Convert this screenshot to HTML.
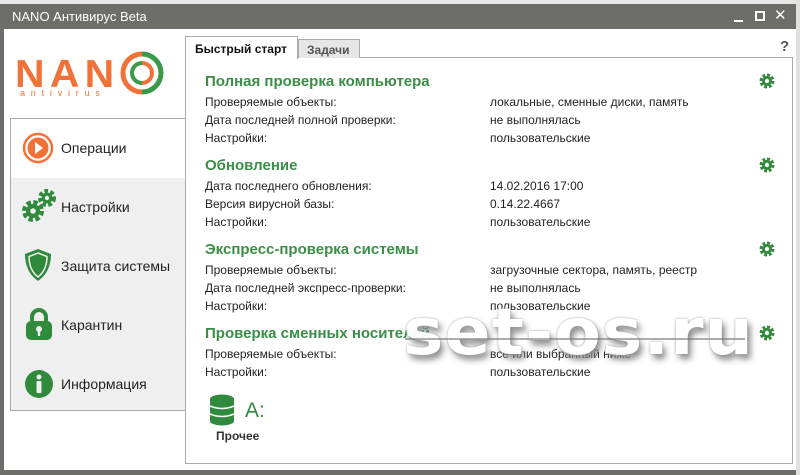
<!DOCTYPE html>
<html><head><meta charset="utf-8"><style>
*{margin:0;padding:0;box-sizing:border-box}
body{width:800px;height:475px;overflow:hidden;background:#fff;font-family:"Liberation Sans","DejaVu Sans",sans-serif;position:relative;color:#222}
.a{position:absolute}
.t{font-size:12px;white-space:nowrap}
.h{font-size:15px;font-weight:bold;color:#3a8e45;white-space:nowrap}
.nav{font-size:14px;color:#222;white-space:nowrap}
</style></head><body>
<div class="a" style="left:0;top:0;width:800px;height:4px;background:#e8e8e8"></div>
<div class="a" style="left:0;top:4px;width:796px;height:25px;background:#6d6d6a"></div>
<div class="a" style="left:0;top:4px;width:4px;height:471px;background:#6d6d6a"></div>
<div class="a" style="left:0;top:470px;width:796px;height:5px;background:#6d6d6a"></div>
<div class="a" style="left:796px;top:0;width:4px;height:475px;background:#e0e0e0"></div>
<div class="a" style="left:12px;top:9px;color:#fff;font-size:13px">NANO Антивирус Beta</div>
<div class="a" style="left:734px;top:20px;width:9px;height:2px;background:#fff"></div>
<div class="a" style="left:755px;top:11px;width:10px;height:10px;border:2px solid #fff"></div>
<div class="a" style="left:774px;top:6px;color:#fff;font-size:15px;font-weight:bold">✕</div>
<div class="a" style="left:780px;top:38px;font-size:15px;font-weight:bold;color:#555">?</div>

<!-- logo -->
<div class="a" style="left:15px;top:53px;font-size:39px;color:#f07238;letter-spacing:5px;font-weight:bold;transform:scaleX(1.05);transform-origin:left">NAN</div>
<svg class="a" style="left:119px;top:50px" width="46" height="46" viewBox="0 0 46 46">
<path d="M23 4 A19 19 0 0 0 23 42" fill="none" stroke="#f07238" stroke-width="5"/>
<path d="M23 4 A19 19 0 0 1 23 42" fill="none" stroke="#3a9a48" stroke-width="5"/>
<path d="M23 13 A10 10 0 0 0 23 33" fill="none" stroke="#3a9a48" stroke-width="4"/>
<path d="M23 13 A10 10 0 0 1 23 33" fill="none" stroke="#f07238" stroke-width="4"/>
</svg>
<div class="a" style="left:20px;top:88px;font-size:9px;color:#f07238;letter-spacing:5.8px">antivirus</div>

<!-- sidebar -->
<div class="a" style="left:10px;top:118px;width:176px;height:293px;background:#efefef;border:1px solid #aaa"></div>
<div class="a" style="left:11px;top:119px;width:175px;height:59px;background:#fff"></div>
<svg class="a" style="left:22px;top:132px" width="32" height="32"><circle cx="16" cy="16" r="14" fill="none" stroke="#f07238" stroke-width="2.5"/><circle cx="16" cy="16" r="10.5" fill="#f07238"/><path d="M13 10 L21 16 L13 22 Z" fill="#fff"/></svg>
<div class="a nav" style="left:61px;top:140px">Операции</div>
<svg class="a" style="left:19px;top:189px" width="38" height="36"><circle cx="14" cy="22" r="8" fill="none" stroke="#2f8a3c" stroke-width="6" stroke-dasharray="4 2.3"/><circle cx="14" cy="22" r="7" fill="#2f8a3c"/><circle cx="14" cy="22" r="2.8" fill="#efefef"/><circle cx="28" cy="9" r="6.5" fill="none" stroke="#2f8a3c" stroke-width="5" stroke-dasharray="3.4 2.2"/><circle cx="28" cy="9" r="5.5" fill="#2f8a3c"/><circle cx="28" cy="9" r="2.2" fill="#efefef"/></svg>
<div class="a nav" style="left:61px;top:199px">Настройки</div>
<svg class="a" style="left:24px;top:248px" width="28" height="34"><path d="M14 1 L27 6 Q27 24 14 33 Q1 24 1 6 Z" fill="#2f8a3c"/><path d="M14 5 L23 8.5 Q23 22 14 29 Q5 22 5 8.5 Z" fill="none" stroke="#efefef" stroke-width="1.5"/></svg>
<div class="a nav" style="left:61px;top:258px">Защита системы</div>
<svg class="a" style="left:25px;top:307px" width="28" height="34"><path d="M7 14 V10 A7 7 0 0 1 21 10 V14" fill="none" stroke="#2f8a3c" stroke-width="4"/><rect x="1" y="14" width="26" height="19" rx="5" fill="#2f8a3c"/><circle cx="14" cy="22" r="3" fill="#efefef"/><rect x="12.8" y="23" width="2.4" height="6" fill="#efefef"/></svg>
<div class="a nav" style="left:61px;top:317px">Карантин</div>
<svg class="a" style="left:24px;top:369px" width="30" height="30"><circle cx="15" cy="15" r="14" fill="#2f8a3c"/><circle cx="15" cy="8" r="2.5" fill="#efefef"/><rect x="12.5" y="12" width="5" height="12" rx="1" fill="#efefef"/></svg>
<div class="a nav" style="left:61px;top:376px">Информация</div>

<!-- content -->
<div class="a" style="left:185px;top:57px;width:608px;height:407px;border:1px solid #aaa;background:#fff"></div>
<div class="a" style="left:298px;top:39px;width:62px;height:19px;background:#e6e6e6;border:1px solid #aaa;border-bottom:none;font-size:12px;font-weight:bold;color:#555;padding:3px 0 0 8px">Задачи</div>
<div class="a" style="left:185px;top:36px;width:113px;height:23px;background:#fff;border:1px solid #aaa;border-bottom:none;font-size:12px;font-weight:bold;color:#111;padding:5px 0 0 9px">Быстрый старт</div>

<div class="a h" style="left:205px;top:73px">Полная проверка компьютера</div>
<div class="a t" style="left:205px;top:95px">Проверяемые объекты:</div><div class="a t" style="left:490px;top:95px">локальные, сменные диски, память</div>
<div class="a t" style="left:205px;top:113px">Дата последней полной проверки:</div><div class="a t" style="left:490px;top:113px">не выполнялась</div>
<div class="a t" style="left:205px;top:131px">Настройки:</div><div class="a t" style="left:490px;top:131px">пользовательские</div>

<div class="a h" style="left:205px;top:157px">Обновление</div>
<div class="a t" style="left:205px;top:179px">Дата последнего обновления:</div><div class="a t" style="left:490px;top:179px">14.02.2016 17:00</div>
<div class="a t" style="left:205px;top:197px">Версия вирусной базы:</div><div class="a t" style="left:490px;top:197px">0.14.22.4667</div>
<div class="a t" style="left:205px;top:215px">Настройки:</div><div class="a t" style="left:490px;top:215px">пользовательские</div>

<div class="a h" style="left:205px;top:241px">Экспресс-проверка системы</div>
<div class="a t" style="left:205px;top:263px">Проверяемые объекты:</div><div class="a t" style="left:490px;top:263px">загрузочные сектора, память, реестр</div>
<div class="a t" style="left:205px;top:281px">Дата последней экспресс-проверки:</div><div class="a t" style="left:490px;top:281px">не выполнялась</div>
<div class="a t" style="left:205px;top:299px">Настройки:</div><div class="a t" style="left:490px;top:299px">пользовательские</div>

<div class="a h" style="left:205px;top:325px">Проверка сменных носителей</div>
<div class="a t" style="left:205px;top:347px">Проверяемые объекты:</div><div class="a t" style="left:490px;top:347px">все или выбранный ниже</div>
<div class="a t" style="left:205px;top:365px">Настройки:</div><div class="a t" style="left:490px;top:365px">пользовательские</div>

<svg class="a" style="left:759px;top:73px" width="16" height="16"><circle cx="8" cy="8" r="5.5" fill="none" stroke="#2f8a3c" stroke-width="4" stroke-dasharray="2.6 1.7"/><circle cx="8" cy="8" r="5" fill="#2f8a3c"/><circle cx="8" cy="8" r="2.2" fill="#fff"/></svg>
<svg class="a" style="left:759px;top:157px" width="16" height="16"><circle cx="8" cy="8" r="5.5" fill="none" stroke="#2f8a3c" stroke-width="4" stroke-dasharray="2.6 1.7"/><circle cx="8" cy="8" r="5" fill="#2f8a3c"/><circle cx="8" cy="8" r="2.2" fill="#fff"/></svg>
<svg class="a" style="left:759px;top:241px" width="16" height="16"><circle cx="8" cy="8" r="5.5" fill="none" stroke="#2f8a3c" stroke-width="4" stroke-dasharray="2.6 1.7"/><circle cx="8" cy="8" r="5" fill="#2f8a3c"/><circle cx="8" cy="8" r="2.2" fill="#fff"/></svg>
<svg class="a" style="left:759px;top:325px" width="16" height="16"><circle cx="8" cy="8" r="5.5" fill="none" stroke="#2f8a3c" stroke-width="4" stroke-dasharray="2.6 1.7"/><circle cx="8" cy="8" r="5" fill="#2f8a3c"/><circle cx="8" cy="8" r="2.2" fill="#fff"/></svg>

<!-- watermark -->
<div class="a" style="left:403px;top:296px;font-size:64px;font-weight:bold;color:#fff;letter-spacing:1px;text-shadow:3px 5px 6px #888,0 0 2px #999;font-family:'DejaVu Sans','Liberation Sans',sans-serif;opacity:.95;transform:scaleX(1.06);transform-origin:left">set-os.ru</div>
<div class="a" style="left:405px;top:338px;width:340px;height:2px;background:#777;opacity:.6"></div>

<!-- drive -->
<svg class="a" style="left:209px;top:394px" width="26" height="32"><ellipse cx="13" cy="5" rx="12" ry="4.5" fill="#2f8a3c"/><rect x="1" y="5" width="24" height="22" fill="#2f8a3c"/><ellipse cx="13" cy="27" rx="12" ry="4.5" fill="#2f8a3c"/><path d="M1 12 Q13 17 25 12 M1 20 Q13 25 25 20" stroke="#fff" stroke-width="1.5" fill="none"/></svg>
<div class="a" style="left:245px;top:399px;font-size:21px;color:#2f8a3c">A:</div>
<div class="a" style="left:216px;top:429px;font-size:12px;font-weight:bold;color:#333">Прочее</div>
</body></html>
